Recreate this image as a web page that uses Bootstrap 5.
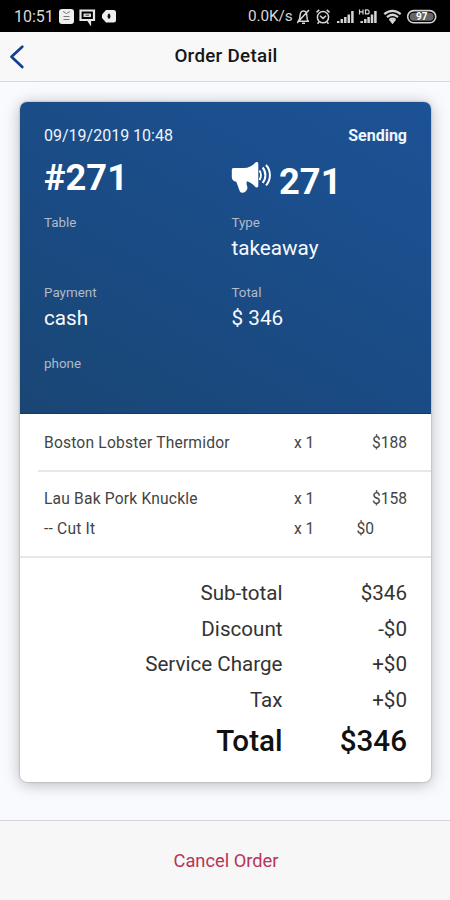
<!DOCTYPE html>
<html lang="en">
<head>
<meta charset="utf-8">
<meta name="viewport" content="width=device-width, initial-scale=1">
<title>Order Detail</title>
<link href="https://cdn.jsdelivr.net/npm/bootstrap@5.3.0/dist/css/bootstrap.min.css" rel="stylesheet">
<style>
  body { font-family: Roboto, "Noto Sans", sans-serif; background: #f8fafd; color: #222; height: 900px; overflow: hidden; }
  .status-bar { height: 32px; background: #000; color: #d8d8d8; padding: 1px 13px 0 14px; }
  .status-bar svg { display: block; }
  .status-clock { width: 44px; font-size: 16px; }
  .net-speed { font-size: 15.3px; letter-spacing: -.1px; width: 49px; white-space: nowrap; }
  .title-bar { height: 50px; background: #f8f8f8; border-bottom: 1px solid #d6d8da; display: grid; grid-template-columns: 40px 1fr 38px; }
  .page-title { font-size: 18.8px; font-weight: 500; color: #161616; letter-spacing: .3px; line-height: 24px; margin-top: -1px; }
  .page-main { padding: 20px 19px 0 20px; height: 738px; }
  .order-card { height: 680px; border-radius: 7px; background: #fff; box-shadow: 0 2px 16px rgba(0,0,0,.27), 0 0 2px rgba(0,0,0,.35); overflow: hidden; }
  .order-head { height: 311.5px; padding: 22px 24px 0; color: #fff; background: linear-gradient(30deg, #194674 0%, #1a4b84 45%, #1c5296 100%); border-bottom: 1px solid #0d3a75; }
  .head-line { height: 24px; font-size: 16px; line-height: 24px; color: #f0f4fb; }
  .head-grid { display: grid; grid-template-columns: 187.5px 1fr; }
  .number-row { height: 65px; padding-top: 8px; font-size: 36.3px; line-height: 44px; font-weight: 700; }
  .call-number { padding-top: 4px; gap: 7.5px; margin-left: -1px; }
  .field { height: 70.3px; }
  .field-label { font-size: 13.4px; line-height: 20px; color: #b2bbc8; }
  .field-value { font-size: 20.7px; line-height: 31px; color: #f7f9fd; }
  .item-list { font-size: 15.6px; color: #444; }
  .item-block { margin-left: 18px; padding: 0 24px 0 6px; border-bottom: 2px solid #e6e7e8; }
  .item-block.first-item { height: 58px; padding-top: 17px; }
  .item-block.last-item { height: 86px; padding-top: 15px; margin-left: 0; padding-left: 24px; }
  .item-line { display: grid; grid-template-columns: 250px 62.5px 1fr; line-height: 24px; height: 30.5px; }
  .item-name { letter-spacing: .19px; }
  .sum-list { padding: 17.5px 24px 0; font-size: 20.6px; color: #333; }
  .sum-line { display: grid; grid-template-columns: 238.5px 1fr; height: 35.7px; line-height: 36px; text-align: right; }
  .grand-line { font-size: 29.6px; font-weight: 500; height: 46px; line-height: 46px; color: #111; }
  .foot-bar { height: 80px; background: #f7f7f7; border-top: 1px solid #d4d5d6; }
  .cancel-link { color: #ba3359; font-size: 18.3px; text-decoration: none; margin-left: 2px; }
</style>
</head>
<body>
<div class="status-bar d-flex align-items-center">
  <span class="status-clock">10:51</span>
  <svg width="60" height="18" viewBox="0 0 60 18">
    <rect x="1" y="1" width="15" height="15" rx="3" fill="#eee"/>
    <path d="M5 3.500l3.500 2L12 3.500M5.500 8.500h6M5.500 11.500h6" stroke="#777" fill="none"/>
    <path d="M25 2.500h-2.500v9.500H30l2 3v-3h4V2.500H25z" fill="none" stroke="#e6e6e6" stroke-width="2.200"/>
    <rect x="25.500" y="5.500" width="7.500" height="3.500" rx=".5" fill="#ddd"/><path d="M27.500 7.200h3.500" stroke="#333"/>
    <path d="M48 2h7.500a2.500 2.500 0 0 1 2.500 2.500V12a2.500 2.500 0 0 1-2.500 2.500H48L44 10V6.500z" fill="#eee"/>
    <ellipse cx="51" cy="8.200" rx="1.400" ry="2.600" fill="#111"/>
  </svg>
  <span class="net-speed ms-auto">0.0K/s</span>
  <svg width="140" height="18" viewBox="0 0.6 140 18" fill="none" stroke="#d4d4d4" stroke-width="1.500">
    <path d="M.5 13.800h11.500M1.500 13.500c2-2 1-6.500 2.500-8.800C5 3.200 8 3 9.200 5c1.100 2 .2 6.500 1.600 8.500M5 15.800h3M0 15.500L12 2.500"/>
    <circle cx="26" cy="9.800" r="5.600"/><path d="M19.500 5L22.300 2.500M32.500 5L29.700 2.500M23 8.300l3 2.700 3-2.700M22 14.300l-1.400 2M30 14.300l1.400 2"/>
    <path stroke-width="2.500" d="M41.200 15.500v-2M44.800 15.500v-4M48.300 15.500V9.500M51.800 15.500V7M55.400 15.500V3.500M64.700 15.500v-2M68.300 15.500v-4M71.600 15.500V9.500M75 15.500V7M78.400 15.500V3.500"/>
    <path stroke-width="1.200" d="M62.500 2v5M66 2v5M62.500 4.500H66M68.500 2.500h2c2.200 0 2.200 4 0 4h-2z"/>
    <path stroke-width="2.200" d="M87.300 6.800c5-4.400 11.500-4.400 16.400 0M90 9.700c3.500-3 7.500-3 11 0M92.500 12.400c2-1.500 4-1.500 6 0"/><path d="M93.500 13.200h4l-2 2.500z" fill="#ddd"/>
    <rect x="110.700" y="3.200" width="28" height="12.200" rx="6" stroke-width="1.600"/><rect x="112.800" y="5.300" width="23.800" height="8" rx="4" fill="#666" stroke="none"/>
    <text x="124.700" y="12.900" text-anchor="middle" font-family="Roboto, sans-serif" font-size="10" font-weight="700" fill="#fff" stroke="none">97</text>
  </svg>
</div>
<header class="title-bar align-items-center">
  <svg width="40" height="32" viewBox="0 0 40 32" fill="none" stroke="#123f91" stroke-width="2.700" stroke-linecap="round" stroke-linejoin="round"><path d="M22.300 5.700L11.500 15.800 22.300 26"/></svg>
  <div class="page-title text-center">Order Detail</div>
</header>
<main class="page-main">
  <section class="order-card">
    <div class="order-head">
      <div class="head-line d-flex justify-content-between"><span>09/19/2019 10:48</span><span class="fw-bold">Sending</span></div>
      <div class="head-grid number-row">
        <div>#271</div>
        <div class="call-number d-flex">
          <svg width="41" height="34" viewBox="0 0 41 34" fill="#fff">
            <path d="M2.500 8H12.500c5 0 9-2.500 12-5.600 1.300-1 2.800-.4 2.800 1.300v22c0 1.700-1.700 2.200-2.900 1.200-2.500-2.700-4.800-4.600-8.400-5.700-.7 1.500-.6 3 .1 4.800.8 2 .2 3.400-.9 4.800-.9 1.300-2.500 2.200-4.200 1.900-1.500-.2-2-.9-2.500-2.300L5.300 21.700C2.500 21.300.8 19.800.8 17v-7c0-1.200.6-2 1.700-2z"/>
            <path d="M28.500 10.500c1.800 2.600 1.800 6.800 0 9.500M31.600 7.500c3.700 4.200 3.700 11.200 0 15.400M35 5c5.200 5.700 5.200 14.700 0 20.400" fill="none" stroke="#fff" stroke-width="2"/>
          </svg>
          <span>271</span>
        </div>
      </div>
      <div class="head-grid">
        <div class="field"><div class="field-label">Table</div></div>
        <div class="field"><div class="field-label">Type</div><div class="field-value">takeaway</div></div>
        <div class="field"><div class="field-label">Payment</div><div class="field-value">cash</div></div>
        <div class="field"><div class="field-label">Total</div><div class="field-value">$ 346</div></div>
        <div class="field"><div class="field-label">phone</div></div>
      </div>
    </div>
    <div class="item-list">
      <div class="item-block first-item">
        <div class="item-line"><span class="item-name">Boston Lobster Thermidor</span><span>x 1</span><span class="text-end">$188</span></div>
      </div>
      <div class="item-block last-item">
        <div class="item-line"><span class="item-name">Lau Bak Pork Knuckle</span><span>x 1</span><span class="text-end">$158</span></div>
        <div class="item-line"><span class="item-name">-- Cut It</span><span>x 1</span><span>$0</span></div>
      </div>
    </div>
    <div class="sum-list">
      <div class="sum-line"><span>Sub-total</span><span>$346</span></div>
      <div class="sum-line"><span>Discount</span><span>-$0</span></div>
      <div class="sum-line"><span>Service Charge</span><span>+$0</span></div>
      <div class="sum-line"><span>Tax</span><span>+$0</span></div>
      <div class="sum-line grand-line"><span>Total</span><span>$346</span></div>
    </div>
  </section>
</main>
<footer class="foot-bar d-flex align-items-center justify-content-center">
  <a class="cancel-link" href="#">Cancel Order</a>
</footer>
<script src="https://cdn.jsdelivr.net/npm/bootstrap@5.3.0/dist/js/bootstrap.bundle.min.js"></script>
</body>
</html>
